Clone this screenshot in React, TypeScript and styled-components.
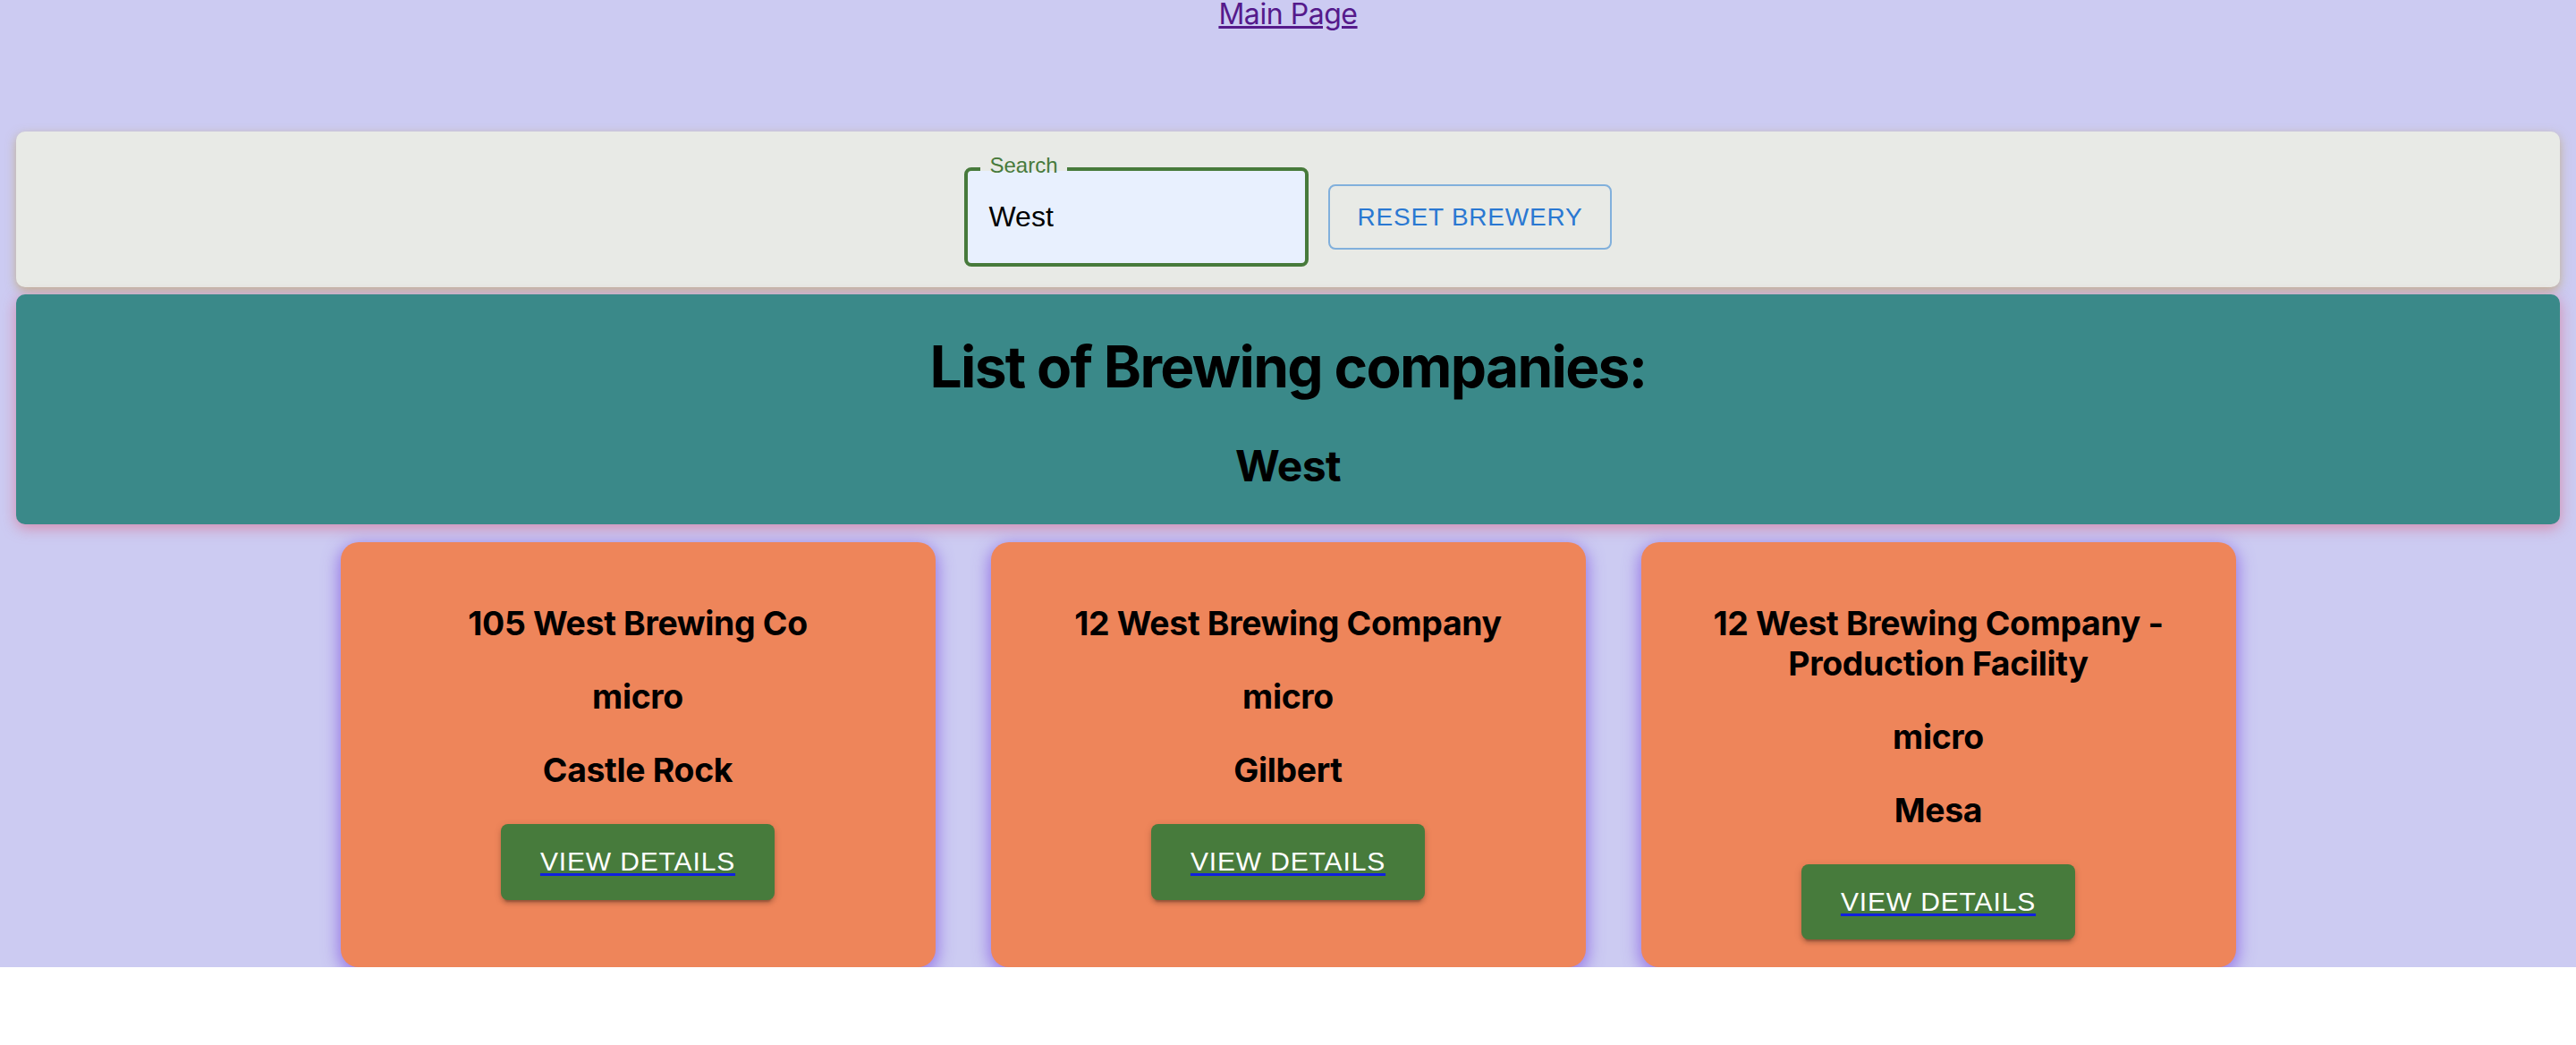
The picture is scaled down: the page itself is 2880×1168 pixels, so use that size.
import React from "react";
import styled, { createGlobalStyle } from "styled-components";

const GlobalStyle = createGlobalStyle`
  html, body {
    margin: 0;
    padding: 0;
    background: #ffffff;
  }
  body {
    font-family: Inter, "Noto Sans", "Liberation Sans", sans-serif;
    color: #000;
  }
`;

const Page = styled.div`
  background: #cccbf2;
  text-align: center;
  display: flow-root;
`;

const Header = styled.nav`
  height: 147px;
`;

const MainLink = styled.a`
  font-size: 32px;
  line-height: 32px;
  letter-spacing: -0.45px;
  color: #551a8b;
  text-decoration: underline;
  text-underline-offset: 2px;
`;

const SearchPanel = styled.section`
  margin: 0 18px;
  padding: 40px 0 23px;
  background: #e8eae6;
  border-radius: 10px;
  box-shadow: 0 4px 12px rgba(190, 165, 100, 0.7);
  display: flex;
  justify-content: center;
  align-items: center;
  gap: 22px;
`;

const Field = styled.div`
  position: relative;
  width: 385px;
  height: 111px;
  box-sizing: border-box;
  padding: 4px;
`;

const Input = styled.input`
  box-sizing: border-box;
  display: block;
  width: 100%;
  height: 100%;
  margin: 0;
  border: none;
  outline: none;
  border-radius: 4px;
  padding: 0 23px;
  background: #e8f0fe;
  font-family: "Liberation Sans", Arial, sans-serif;
  font-size: 32px;
  color: #000;
`;

const Outline = styled.fieldset`
  position: absolute;
  top: -10px;
  left: 0;
  right: 0;
  bottom: 0;
  margin: 0;
  padding: 0 14px;
  border: 4px solid #477a3b;
  border-radius: 8px;
  pointer-events: none;
  text-align: left;
`;

const Legend = styled.legend`
  padding: 0;
  height: 24px;
  font-family: "Liberation Sans", Arial, sans-serif;
  font-size: 24px;
  line-height: 24px;
  visibility: hidden;
  white-space: nowrap;
  span {
    padding: 0 10px;
  }
`;

const Label = styled.label`
  position: absolute;
  left: 28px;
  top: -14px;
  font-family: "Liberation Sans", Arial, sans-serif;
  font-size: 24px;
  line-height: 24px;
  color: #477a3b;
`;

const OutlinedButton = styled.button`
  box-sizing: border-box;
  margin: 0;
  padding: 10px 30px;
  border: 2px solid rgba(25, 118, 210, 0.5);
  border-radius: 8px;
  background: transparent;
  color: #2a78d2;
  font-family: "Liberation Sans", Arial, sans-serif;
  font-size: 28px;
  line-height: 1.75;
  letter-spacing: 0.8px;
  text-transform: uppercase;
  cursor: pointer;
`;

const Banner = styled.section`
  margin: 8px 18px 0;
  background: #3a8989;
  border-radius: 10px;
  box-shadow: 0 4px 16px rgba(215, 105, 135, 0.65);
  display: flow-root;
`;

const Title = styled.h1`
  margin: 42px 0 43px;
  font-size: 64px;
  font-weight: 700;
  line-height: normal;
  letter-spacing: -1.7px;
`;

const Subtitle = styled.h2`
  margin: 43px 0 36px;
  font-size: 48px;
  font-weight: 700;
  line-height: normal;
  letter-spacing: -0.6px;
`;

const CardRow = styled.div`
  display: flex;
  justify-content: center;
  align-items: stretch;
  gap: 62px;
  padding-top: 20px;
`;

const Card = styled.article`
  box-sizing: border-box;
  width: 665px;
  padding: 32px 30px 31px;
  background: #ee855a;
  border-radius: 20px;
  box-shadow: 0 5px 18px 2px rgba(135, 95, 225, 0.8);
  display: flow-root;
  text-align: center;
`;

const CardLine = styled.h3`
  margin: 37.44px 0;
  font-size: 37.44px;
  font-weight: 700;
  line-height: 44.5px;
  letter-spacing: -0.35px;
`;

const DetailsButton = styled.a`
  display: inline-flex;
  align-items: center;
  justify-content: center;
  padding: 16px 44px;
  background: #477b3c;
  border-radius: 8px;
  box-shadow: 0 6px 2px -4px rgba(0, 0, 0, 0.2), 0 4px 4px 0 rgba(0, 0, 0, 0.14),
    0 2px 10px 0 rgba(0, 0, 0, 0.12);
  color: #ffffff;
  font-family: "Liberation Sans", Arial, sans-serif;
  font-size: 30px;
  line-height: 1.75;
  letter-spacing: 0.86px;
  text-transform: uppercase;
  text-decoration: underline;
  text-decoration-color: #1020e0;
  text-decoration-thickness: 3px;
  text-underline-offset: 3px;
  cursor: pointer;
`;

type Brewery = { name: string; type: string; city: string };

const breweries: Brewery[] = [
  { name: "105 West Brewing Co", type: "micro", city: "Castle Rock" },
  { name: "12 West Brewing Company", type: "micro", city: "Gilbert" },
  {
    name: "12 West Brewing Company - Production Facility",
    type: "micro",
    city: "Mesa",
  },
];

export default function App() {
  return (
    <>
      <GlobalStyle />
      <Page>
        <Header>
          <MainLink href="#">Main Page</MainLink>
        </Header>
        <SearchPanel>
          <Field>
            <Label htmlFor="search">Search</Label>
            <Input id="search" defaultValue="West" />
            <Outline aria-hidden="true">
              <Legend>
                <span>Search</span>
              </Legend>
            </Outline>
          </Field>
          <OutlinedButton type="button">Reset Brewery</OutlinedButton>
        </SearchPanel>
        <Banner>
          <Title>List of Brewing companies:</Title>
          <Subtitle>West</Subtitle>
        </Banner>
        <CardRow>
          {breweries.map((b) => (
            <Card key={b.name}>
              <CardLine>{b.name}</CardLine>
              <CardLine>{b.type}</CardLine>
              <CardLine>{b.city}</CardLine>
              <DetailsButton href="#">View Details</DetailsButton>
            </Card>
          ))}
        </CardRow>
      </Page>
    </>
  );
}
